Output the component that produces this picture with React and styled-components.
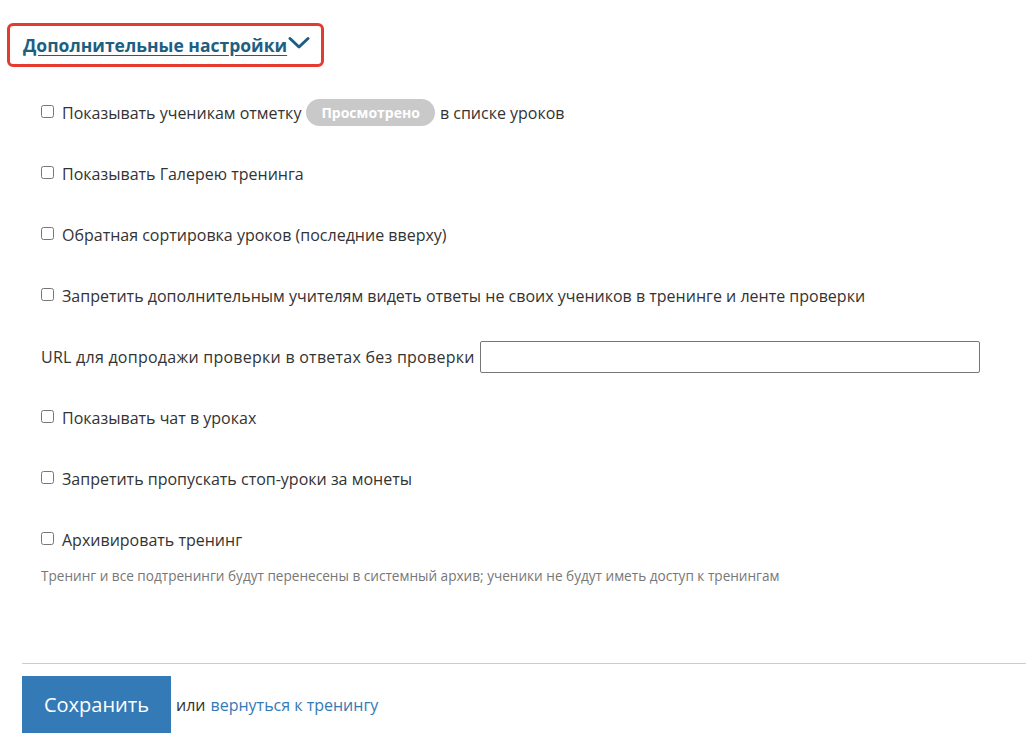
import React, { useState } from "react";
import styled, { createGlobalStyle } from "styled-components";

const GlobalStyle = createGlobalStyle`
  html, body {
    margin: 0;
    padding: 0;
    background: #fff;
  }
  body {
    font-family: "Open Sans", "Liberation Sans", Arial, sans-serif;
    color: #333;
  }
`;

const Page = styled.div`
  width: 1026px;
  height: 754px;
  overflow: hidden;
  padding-top: 23px;
  box-sizing: border-box;
`;

const ToggleBox = styled.div`
  margin-left: 7px;
  width: 317px;
  height: 44px;
  box-sizing: border-box;
  border: 3px solid #e53a2f;
  border-radius: 6px;
  display: flex;
  align-items: center;
  padding-left: 13px;
`;

const ToggleLink = styled.a`
  display: inline-flex;
  align-items: center;
  font-size: 17.5px;
  font-weight: 700;
  color: #1d5f82;
  text-decoration: underline;
  text-underline-offset: 3px;
  cursor: pointer;
`;

const Chevron = styled.svg`
  width: 22px;
  height: 14px;
  margin-left: 1px;
  margin-top: -4px;
`;

const Settings = styled.div`
  padding: 15px 0 0 41px;
`;

const Row = styled.label`
  display: flex;
  align-items: center;
  height: 61px;
  font-size: 16px;
  color: #333;
`;

const FieldRow = styled.div`
  display: flex;
  align-items: center;
  height: 61px;
  font-size: 16px;
  color: #333;
  letter-spacing: 0.25px;
`;

const Check = styled.input.attrs({ type: "checkbox" })`
  width: 13px;
  height: 13px;
  margin: 0 8px 2px 0;
  flex: none;
`;

const Badge = styled.span`
  display: inline-flex;
  align-items: center;
  height: 27px;
  padding: 0 15px;
  margin: 0 5px;
  border-radius: 14px;
  background: #c9c9c9;
  color: #fff;
  font-size: 14px;
  font-weight: 700;
`;

const UrlInput = styled.input`
  width: 500px;
  height: 32px;
  box-sizing: border-box;
  margin-left: 5px;
  border: 1px solid #767676;
  border-radius: 2px;
  font-size: 14px;
  padding: 0 6px;
`;

const Hint = styled.div`
  font-size: 13.6px;
  color: #777;
  margin-top: -4px;
`;

const Footer = styled.div`
  margin: 78px 0 0 22px;
  border-top: 1px solid #ccc;
  padding-top: 12px;
  display: flex;
  align-items: center;
  gap: 5px;
  font-size: 16px;
`;

const SaveButton = styled.button`
  width: 149px;
  height: 57px;
  border: none;
  border-radius: 0;
  background: #337ab7;
  color: #fff;
  font-family: inherit;
  font-size: 20px;
  cursor: pointer;
`;

const BackLink = styled.a`
  color: #337ab7;
  text-decoration: none;
`;

const options = [
  { id: "viewed", badge: true },
  { id: "gallery", text: "Показывать Галерею тренинга" },
  { id: "reverse", text: "Обратная сортировка уроков (последние вверху)" },
  {
    id: "teachers",
    text: "Запретить дополнительным учителям видеть ответы не своих учеников в тренинге и ленте проверки",
  },
  { id: "url" },
  { id: "chat", text: "Показывать чат в уроках" },
  { id: "stop", text: "Запретить пропускать стоп-уроки за монеты" },
  { id: "archive", text: "Архивировать тренинг" },
];

export default function App() {
  const [checked, setChecked] = useState({});
  const [url, setUrl] = useState("");
  const toggle = (id) => setChecked((c) => ({ ...c, [id]: !c[id] }));

  return (
    <Page>
      <GlobalStyle />
      <ToggleBox>
        <ToggleLink>
          Дополнительные настройки
          <Chevron viewBox="0 0 22 14">
            <path
              d="M2 2.5 L11 11 L20 2.5"
              fill="none"
              stroke="#1d5f82"
              strokeWidth="3"
              strokeLinecap="round"
              strokeLinejoin="round"
            />
          </Chevron>
        </ToggleLink>
      </ToggleBox>

      <Settings>
        {options.map((o) => {
          if (o.id === "url") {
            return (
              <FieldRow key={o.id}>
                URL для допродажи проверки в ответах без проверки
                <UrlInput value={url} onChange={(e) => setUrl(e.target.value)} />
              </FieldRow>
            );
          }
          return (
            <Row key={o.id}>
              <Check checked={!!checked[o.id]} onChange={() => toggle(o.id)} />
              {o.badge ? (
                <>
                  Показывать ученикам отметку<Badge>Просмотрено</Badge>в списке уроков
                </>
              ) : (
                o.text
              )}
            </Row>
          );
        })}
        <Hint>
          Тренинг и все подтренинги будут перенесены в системный архив; ученики не будут иметь
          доступ к тренингам
        </Hint>
      </Settings>

      <Footer>
        <SaveButton>Сохранить</SaveButton>
        или<BackLink href="#">вернуться к тренингу</BackLink>
      </Footer>
    </Page>
  );
}
